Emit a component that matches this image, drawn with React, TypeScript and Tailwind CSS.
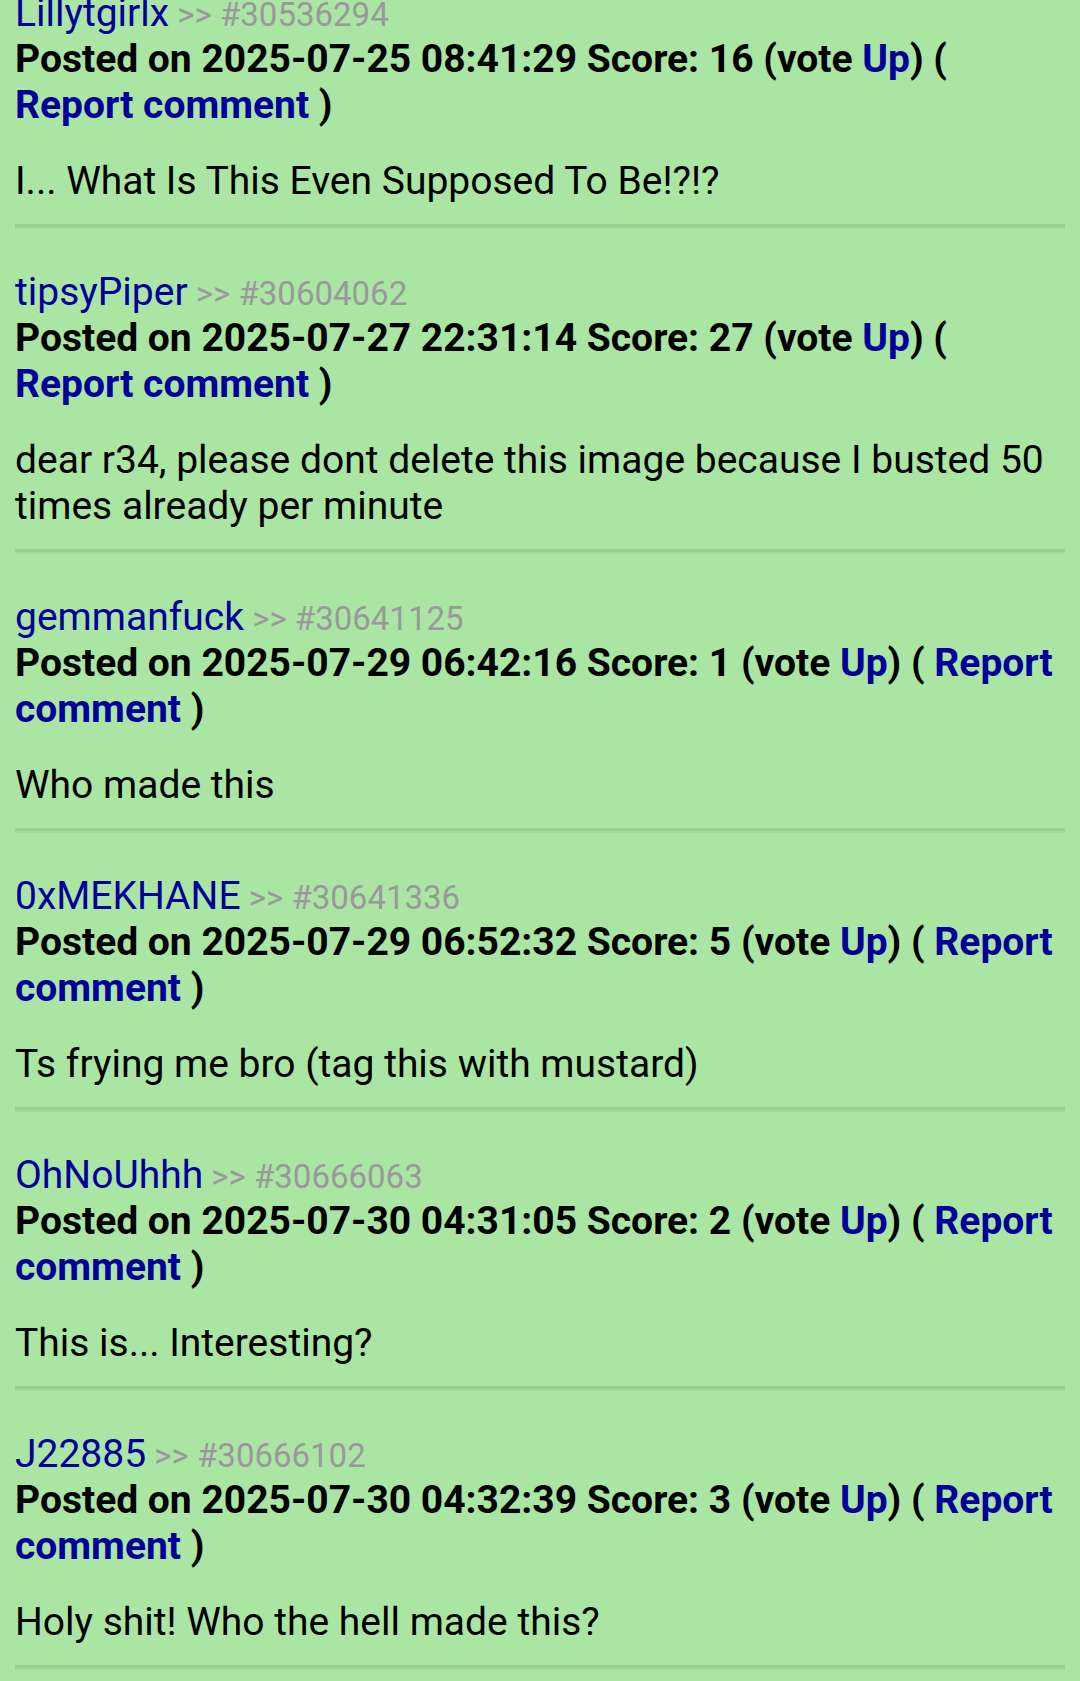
import React from "react";

type Comment = {
  user: string;
  id: string;
  date: string;
  score: number;
  body: string;
};

const comments: Comment[] = [
  { user: "Lillytgirlx", id: "30536294", date: "2025-07-25 08:41:29", score: 16, body: "I... What Is This Even Supposed To Be!?!?" },
  { user: "tipsyPiper", id: "30604062", date: "2025-07-27 22:31:14", score: 27, body: "dear r34, please dont delete this image because I busted 50 times already per minute" },
  { user: "gemmanfuck", id: "30641125", date: "2025-07-29 06:42:16", score: 1, body: "Who made this" },
  { user: "0xMEKHANE", id: "30641336", date: "2025-07-29 06:52:32", score: 5, body: "Ts frying me bro (tag this with mustard)" },
  { user: "OhNoUhhh", id: "30666063", date: "2025-07-30 04:31:05", score: 2, body: "This is... Interesting?" },
  { user: "J22885", id: "30666102", date: "2025-07-30 04:32:39", score: 3, body: "Holy shit! Who the hell made this?" },
];

function CommentBlock({ c, first }: { c: Comment; first: boolean }) {
  return (
    <div className={first ? "-mt-[10px]" : "mt-[40px]"}>
      <div className="text-[39px] leading-[46px] whitespace-nowrap">
        <a className="text-[#000099]">{c.user}</a>
        <span className="text-[#999999] text-[33px] leading-none"> &gt;&gt; #{c.id}</span>
      </div>
      <div className="text-[39px] leading-[46px] font-bold text-black">
        Posted on {c.date} Score: {c.score} (vote <a className="text-[#000099]">Up</a>) ({" "}
        <a className="text-[#000099]">Report comment</a> )
      </div>
      <div className="mt-[30px] text-[39px] leading-[46px] text-black">{c.body}</div>
      <div className="mt-[20px] h-[5px] border-t-[3px] border-b-[2px] border-t-[#98cf92] border-b-[#a3dc9d]" />
    </div>
  );
}

export default function App() {
  return (
    <div
      className="w-[1080px] h-[1681px] overflow-hidden bg-[#aae5a4] px-[15px]"
      style={{ fontFamily: "Roboto, 'Noto Sans', sans-serif" }}
    >
      {comments.map((c, i) => (
        <CommentBlock key={c.id} c={c} first={i === 0} />
      ))}
    </div>
  );
}
